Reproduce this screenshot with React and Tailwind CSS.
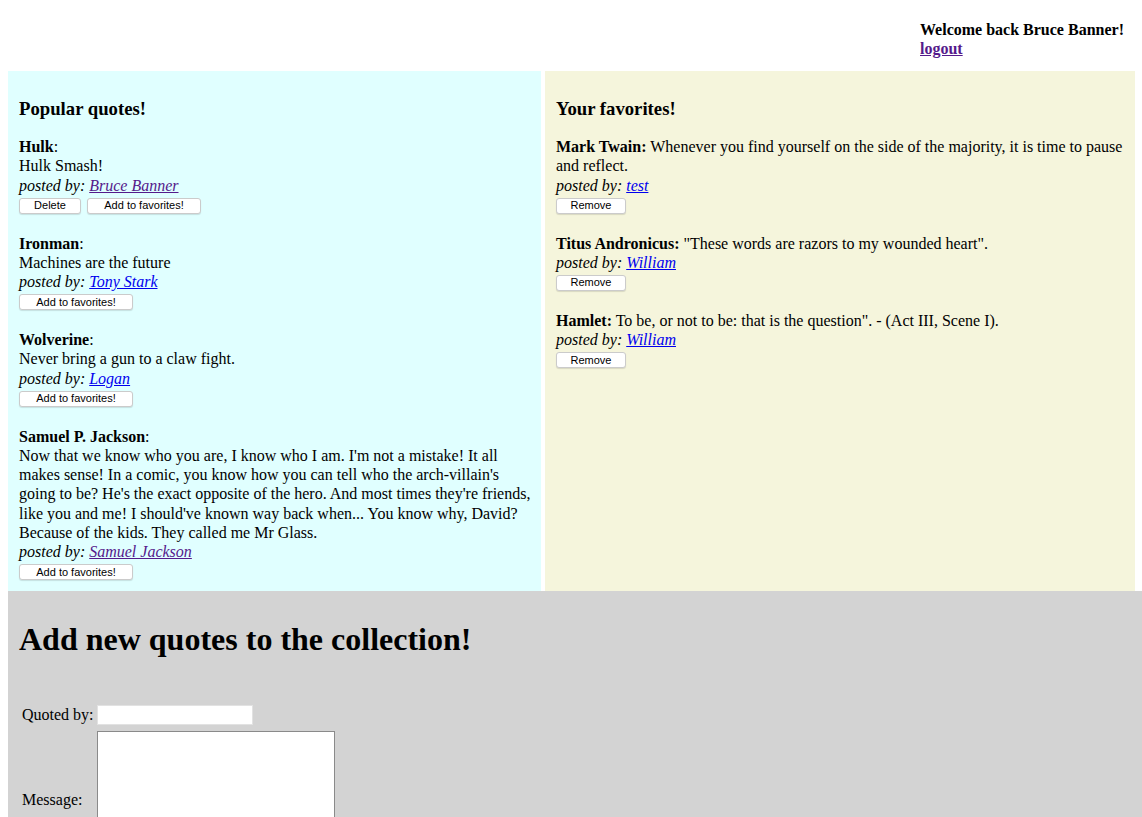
const POPULAR = [
  {
    author: "Hulk",
    text: "Hulk Smash!",
    by: "Bruce Banner",
    visited: true,
    canDelete: true,
  },
  {
    author: "Ironman",
    text: "Machines are the future",
    by: "Tony Stark",
  },
  {
    author: "Wolverine",
    text: "Never bring a gun to a claw fight.",
    by: "Logan",
  },
  {
    author: "Samuel P. Jackson",
    text: "Now that we know who you are, I know who I am. I'm not a mistake! It all makes sense! In a comic, you know how you can tell who the arch-villain's going to be? He's the exact opposite of the hero. And most times they're friends, like you and me! I should've known way back when... You know why, David? Because of the kids. They called me Mr Glass.",
    by: "Samuel Jackson",
    visited: true,
  },
];

const FAVORITES = [
  {
    author: "Mark Twain:",
    text: "Whenever you find yourself on the side of the majority, it is time to pause and reflect.",
    by: "test",
  },
  {
    author: "Titus Andronicus:",
    text: "\"These words are razors to my wounded heart\".",
    by: "William",
  },
  {
    author: "Hamlet:",
    text: "To be, or not to be: that is the question\". - (Act III, Scene I).",
    by: "William",
  },
];

function SmallButton({ children, width }) {
  return (
    <button
      type="button"
      className={[
        "h-[16px] rounded-[3px] border border-[#cbcbcb] bg-white font-['Liberation_Sans',Arial,sans-serif] text-[11px] leading-none text-black shadow-[0_1px_1px_rgba(0,0,0,0.12)]",
        width,
      ].join(" ")}
    >
      {children}
    </button>
  );
}

function PostedBy({ name, visited }) {
  return (
    <div>
      <i>posted by: </i>
      <a href="#" className={visited ? "italic underline text-[#551a8b]" : "italic underline text-[#0000ee]"}>
        {name}
      </a>
    </div>
  );
}

export default function App() {
  return (
    <div className="min-h-screen bg-white font-['Liberation_Serif','Times_New_Roman',serif] text-[16px] leading-[19.25px] text-black">
      <header className="flex h-[71px] justify-end pt-[20px]">
        <div className="w-[222px]">
          <div className="font-bold">Welcome back Bruce Banner!</div>
          <a href="#" className="font-bold text-[#551a8b] underline">
            logout
          </a>
        </div>
      </header>

      <div className="ml-[8px] flex h-[520px] gap-[4px]">
        <section className="w-[533px] bg-[#e0ffff] pl-[11px] pr-[10px] pt-[10px]">
          <h3 className="mb-[17px] mt-[17px] text-[18.72px] font-bold leading-[22px]">Popular quotes!</h3>
          {POPULAR.map((q) => (
            <div key={q.author} className="mb-[20px]">
              <div>
                <b>{q.author}</b>:
              </div>
              <div>{q.text}</div>
              <PostedBy name={q.by} visited={q.visited} />
              <div className="mt-[2.75px] flex gap-[6px]">
                {q.canDelete && <SmallButton width="w-[62px]">Delete</SmallButton>}
                <SmallButton width="w-[114px]">Add to favorites!</SmallButton>
              </div>
            </div>
          ))}
        </section>

        <section className="w-[590px] bg-[#f5f5dc] pl-[11px] pr-[10px] pt-[10px]">
          <h3 className="mb-[17px] mt-[17px] text-[18.72px] font-bold leading-[22px]">Your favorites!</h3>
          {FAVORITES.map((q) => (
            <div key={q.author} className="mb-[20px]">
              <div>
                <b>{q.author}</b> {q.text}
              </div>
              <PostedBy name={q.by} />
              <div className="mt-[2.75px] flex">
                <SmallButton width="w-[70px]">Remove</SmallButton>
              </div>
            </div>
          ))}
        </section>
      </div>

      <section className="ml-[8px] min-h-[300px] bg-[#d3d3d3] pl-[11px] pt-[10px]">
        <h1 className="mt-[20px] text-[32px] font-bold leading-[37px]">Add new quotes to the collection!</h1>
        <form className="ml-[3px] mt-[47px] grid w-fit grid-cols-[auto_auto] items-center gap-x-[3px] gap-y-[6px]">
          <label>Quoted by:</label>
          <input type="text" className="h-[20px] w-[156px] border border-[#e2e2e2] bg-white" />
          <label>Message:</label>
          <textarea className="h-[138px] w-[238px] resize-none border border-[#8a8a8a] bg-white" />
        </form>
      </section>
    </div>
  );
}
